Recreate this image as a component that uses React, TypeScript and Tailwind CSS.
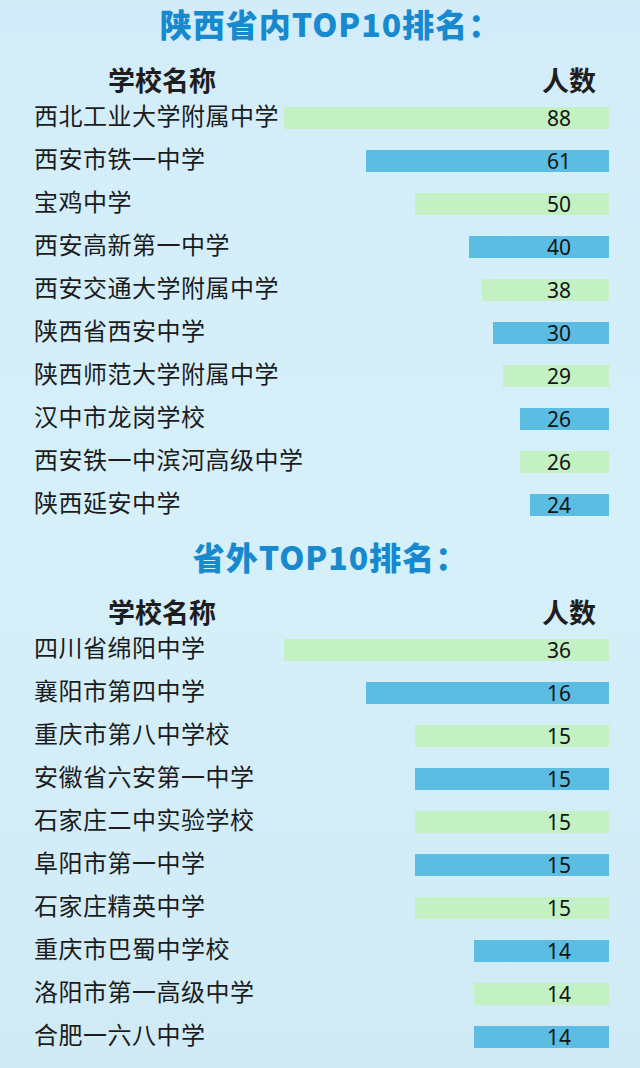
const inProvince = [
  { name: "西北工业大学附属中学", count: 88, width: 325 },
  { name: "西安市铁一中学", count: 61, width: 243 },
  { name: "宝鸡中学", count: 50, width: 194 },
  { name: "西安高新第一中学", count: 40, width: 140 },
  { name: "西安交通大学附属中学", count: 38, width: 127 },
  { name: "陕西省西安中学", count: 30, width: 116 },
  { name: "陕西师范大学附属中学", count: 29, width: 106 },
  { name: "汉中市龙岗学校", count: 26, width: 89 },
  { name: "西安铁一中滨河高级中学", count: 26, width: 89 },
  { name: "陕西延安中学", count: 24, width: 79 },
]

const outProvince = [
  { name: "四川省绵阳中学", count: 36, width: 325 },
  { name: "襄阳市第四中学", count: 16, width: 243 },
  { name: "重庆市第八中学校", count: 15, width: 194 },
  { name: "安徽省六安第一中学", count: 15, width: 194 },
  { name: "石家庄二中实验学校", count: 15, width: 194 },
  { name: "阜阳市第一中学", count: 15, width: 194 },
  { name: "石家庄精英中学", count: 15, width: 194 },
  { name: "重庆市巴蜀中学校", count: 14, width: 135 },
  { name: "洛阳市第一高级中学", count: 14, width: 135 },
  { name: "合肥一六八中学", count: 14, width: 135 },
]

type Row = { name: string; count: number; width: number }

function RankRow({ row, index }: { row: Row; index: number }) {
  const green = index % 2 === 0
  return (
    <div className="flex h-[43px] items-center justify-between">
      <span className="mb-[5px] text-[24px] leading-[32px] tracking-[0.5px] text-[#1c1c1c]">
        {row.name}
      </span>
      {/* bar width comes from data */}
      <div
        className={`flex h-[22px] items-center justify-end ${
          green ? "bg-[#c4f1c4]" : "bg-[#5cbde3]"
        }`}
        style={{ width: row.width }}
      >
        <span className="mr-[25px] w-[50px] text-center font-['Noto_Sans',sans-serif] text-[21px] leading-[22px] text-[#141414]">
          {row.count}
        </span>
      </div>
    </div>
  )
}

function Section({
  title,
  rows,
  titleClass,
  headerClass,
}: {
  title: string
  rows: Row[]
  titleClass: string
  headerClass: string
}) {
  return (
    <section>
      <h2
        className={`flex items-center justify-center pl-[18px] text-[32px] leading-[40px] font-black tracking-[1px] text-[#1789cf] ${titleClass}`}
      >
        {title}
      </h2>
      {/* Table header */}
      <div className={`flex items-end justify-between ${headerClass}`}>
        <span className="ml-[74px] text-[27px] font-bold leading-[32px] text-[#1e1e1e]">
          学校名称
        </span>
        <span className="mr-[13px] text-[27px] font-bold leading-[32px] text-[#1e1e1e]">
          人数
        </span>
      </div>
      <div className="flex flex-col">
        {rows.map((row, i) => (
          <RankRow key={row.name} row={row} index={i} />
        ))}
      </div>
    </section>
  )
}

export default function App() {
  return (
    <div className="h-[1068px] w-[640px] overflow-hidden bg-gradient-to-b from-[#d2edf9] via-[#d6f0fa] to-[#d0ebf6] pl-[34px] pr-[31px] font-['Noto_Sans_CJK_SC','Noto_Sans',sans-serif]">
      <Section
        title="陕西省内TOP10排名："
        rows={inProvince}
        titleClass="h-[46px]"
        headerClass="h-[50px]"
      />
      <Section
        title="省外TOP10排名："
        rows={outProvince}
        titleClass="h-[60px]"
        headerClass="h-[42px]"
      />
    </div>
  )
}
